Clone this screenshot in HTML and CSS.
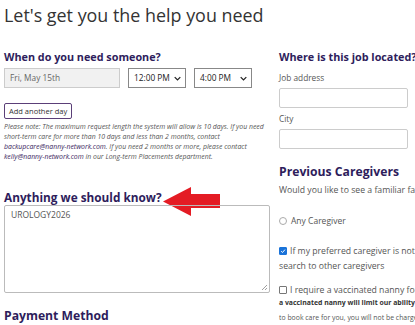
FILE: index.html
```html
<!DOCTYPE html>
<html>
<head>
<meta charset="utf-8">
<link rel="stylesheet" href="styles.css">
</head>
<body>
<div class="page">
  <h1 class="title">Let's get you the help you need</h1>
  <div class="cols">
    <div class="left">
      <h2 class="h hs">When do you need someone?</h2>
      <div class="daterow">
        <div class="date">Fri, May 15th</div>
        <div class="sel">12:00 PM<svg class="chev" viewBox="0 0 10 6"><path d="M1 1l4 4 4-4" fill="none" stroke="#222" stroke-width="1.8"/></svg></div>
        <div class="sel">4:00 PM<svg class="chev" viewBox="0 0 10 6"><path d="M1 1l4 4 4-4" fill="none" stroke="#222" stroke-width="1.8"/></svg></div>
      </div>
      <div class="btnrow"><span class="btn">Add another day</span></div>
      <p class="note">Please note: The maximum request length the system will allow is 10 days. If you need short-term care for more than 10 days and less than 2 months, contact <span class="em">backupcare@nanny-network.com</span>. If you need 2 months or more, please contact <span class="em">kelly@nanny-network.com</span> in our Long-term Placements department.</p>
      <div class="know">
        <h2 class="h hb know-h">Anything we should know?</h2>
        <svg class="arrow" viewBox="0 0 57 29"><path d="M0 14.5 L28 0 L28 7 L57 7 L57 21 L28 21 L28 29 Z" fill="#e41c24"/></svg>
      </div>
      <div class="ta">UROLOGY2026<svg class="grip" viewBox="0 0 8 8"><path d="M7 2L2 7M7 5L5 7" stroke="#888" stroke-width="0.8"/></svg></div>
      <h2 class="h hb pay">Payment Method</h2>
    </div>
    <div class="right">
      <h2 class="h hs">Where is this job located?</h2>
      <div class="lbl">Job address</div>
      <div class="inp"></div>
      <div class="lbl city">City</div>
      <div class="inp"></div>
      <h2 class="h hb prev">Previous Caregivers</h2>
      <div class="txt nowrap">Would you like to see a familiar face again?</div>
      <div class="radio"><span class="rdot"></span>Any Caregiver</div>
      <div class="chk"><span class="cbox on"><svg viewBox="0 0 8 8"><path d="M1.5 4.2l1.8 1.8 3.3-3.8" fill="none" stroke="#fff" stroke-width="1.3"/></svg></span><span class="nowrap">If my preferred caregiver is not available, extend my</span></div>
      <div class="txt2">search to other caregivers</div>
      <div class="chk2"><span class="cbox"></span><span class="nowrap">I require a vaccinated nanny for this request</span></div>
      <div class="small b nowrap">a vaccinated nanny will limit our ability to find care</div>
      <div class="small nowrap">to book care for you, you will not be charged if we cannot</div>
    </div>
  </div>
</div>
</body>
</html>
```
FILE: styles.css
```css
html, body { margin: 0; padding: 0; background: #fff; overflow: hidden; }
body { width: 415px; height: 325px; font-family: "Open Sans", "Noto Sans", sans-serif; color: #555; }
.page { padding: 0 0 0 4px; }
.title { margin: 0; padding-top: 2px; font-size: 17.9px; font-weight: 400; color: #333; line-height: 26px; }
.cols { display: grid; grid-template-columns: 266px 200px; column-gap: 9px; margin-top: 21px; }
.h { margin: 0; font-weight: 700; color: #2e1d5c; line-height: 16px; }
.hs { font-size: 10.8px; }
.hb { font-size: 12.2px; }
.know-h { font-size: 11.8px; }
.daterow { display: flex; gap: 8px; margin-top: 3px; }
.date { width: 109px; height: 18px; border: 1px solid #ccc; background: #f1f1f1; font-size: 8.3px; color: #666; line-height: 18px; padding-left: 5px; }
.sel { position: relative; width: 51px; height: 18px; border: 1px solid #888; background: #fff; font-size: 8.3px; color: #222; line-height: 18px; padding-left: 5px; }
.chev { position: absolute; right: 4px; top: 7px; width: 7px; height: 5px; }
.btnrow { margin-top: 15px; display: flex; }
.btn { border: 1px solid #5b3f78; border-radius: 2px; font-size: 7.5px; color: #333; padding: 1px 4px; line-height: 12px; }
.note { margin: 3px 0 0; font-size: 6.9px; font-style: italic; line-height: 10px; color: #555; width: 262px; }
.em { color: #3a2560; }
.know { position: relative; margin-top: 27px; }
.arrow { position: absolute; left: 159px; top: -2px; width: 57px; height: 29px; }
.ta { position: relative; border: 1px solid #bbb; border-radius: 2px; font-size: 8.5px; color: #555; padding: 3px 6px; box-sizing: border-box; width: 266px; height: 88px; }
.grip { position: absolute; right: 1px; bottom: 1px; width: 8px; height: 8px; }
.pay { margin-top: 15px; }
.right { min-width: 0; }
.lbl { font-size: 8.3px; color: #555; margin-top: 7px; line-height: 12px; }
.lbl.city { margin-top: 5px; }
.inp { width: 127px; height: 18px; border: 1px solid #ccc; border-radius: 2px; margin-top: 4px; }
.prev { margin-top: 15px; }
.txt { font-size: 8.7px; color: #555; margin-top: 4px; line-height: 12px; }
.nowrap { white-space: nowrap; }
.radio { display: flex; align-items: center; gap: 4px; font-size: 8.5px; color: #555; margin-top: 19px; line-height: 12px; }
.rdot { width: 6px; height: 6px; border: 1px solid #aaa; border-radius: 50%; }
.chk { display: flex; align-items: center; gap: 3px; font-size: 8.7px; color: #555; margin-top: 18px; line-height: 12px; }
.cbox { width: 6px; height: 6px; border: 1px solid #777; border-radius: 1px; display: inline-flex; flex: none; }
.cbox.on { background: #1a73d9; border-color: #1a73d9; }
.cbox svg { width: 6px; height: 6px; }
.txt2 { font-size: 8.7px; color: #555; line-height: 14px; margin-top: 2px; }
.chk2 { display: flex; align-items: center; gap: 3px; font-size: 8.7px; color: #555; margin-top: 11px; line-height: 12px; }
.small { font-size: 6.9px; color: #555; line-height: 10px; margin-top: 5px; }
.small.b { font-weight: 700; color: #333; margin-top: 2px; }
```
